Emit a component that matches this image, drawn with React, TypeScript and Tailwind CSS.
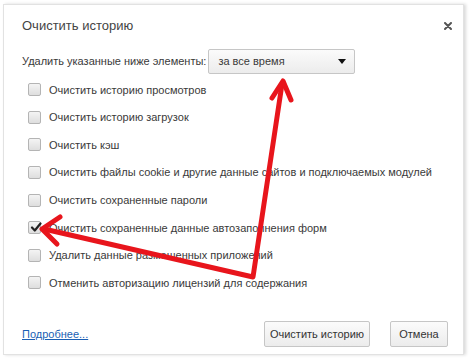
const items = [
  { label: "Очистить историю просмотров", checked: false },
  { label: "Очистить историю загрузок", checked: false },
  { label: "Очистить кэш", checked: false },
  { label: "Очистить файлы cookie и другие данные сайтов и подключаемых модулей", checked: false },
  { label: "Очистить сохраненные пароли", checked: false },
  { label: "Очистить сохраненные данные автозаполнения форм", checked: true },
  { label: "Удалить данные размещенных приложений", checked: false },
  { label: "Отменить авторизацию лицензий для содержания", checked: false },
];

function Checkbox({ checked }: { checked: boolean }) {
  return (
    <span className="relative flex h-[13px] w-[13px] shrink-0 items-center justify-center rounded-[2px] border border-[#b4b4b4] bg-gradient-to-b from-[#f4f4f4] to-[#dedede]">
      {checked && (
        <svg viewBox="0 0 12 12" className="absolute left-[1px] top-[-1px] h-[12px] w-[12px]">
          <path d="M2 6.5 L4.8 9.5 L10.5 2.5" fill="none" stroke="#222" strokeWidth="2.2" strokeLinecap="round" strokeLinejoin="round" />
        </svg>
      )}
    </span>
  );
}

export default function App() {
  return (
    <div
      className="relative h-[360px] w-[474px] overflow-hidden bg-white text-[#3a3a3a]"
      style={{ fontFamily: '"Liberation Sans", Arial, sans-serif' }}
    >
      <div className="ml-[3px] mt-[4px] h-[351px] w-[461px] border border-[#e2e2e2] shadow-[2px_0_3px_rgba(0,0,0,0.15)] pl-[18px] pr-[14px] pt-[11px]">
        <header className="flex h-[20px] items-center justify-between">
          <h1 className="text-[13px] text-[#444]">Очистить историю</h1>
          <svg viewBox="0 0 8 8" className="mr-[-3px] h-[8px] w-[8px]">
            <path d="M1 1 L7 7 M7 1 L1 7" stroke="#555" strokeWidth="2" strokeLinecap="round" />
          </svg>
        </header>

        <div className="mt-[13px] flex h-[25px] items-center text-[11px]">
          <span>Удалить указанные ниже элементы:</span>
          <div className="ml-[2px] flex h-[25px] w-[147px] items-center justify-between rounded-[2px] border border-[#c6c6c6] bg-gradient-to-b from-[#fbfbfb] to-[#ececec] pl-[9px] pr-[8px]">
            <span>за все время</span>
            <svg viewBox="0 0 8 5" className="h-[5px] w-[8px]">
              <path d="M0 0 H8 L4 5 Z" fill="#111" />
            </svg>
          </div>
        </div>

        <ul className="mt-[2px]">
          {items.map((it) => (
            <li key={it.label} className="flex h-[27.6px] items-center gap-[8px] pl-[6px] text-[11px]">
              <Checkbox checked={it.checked} />
              <span className="whitespace-nowrap">{it.label}</span>
            </li>
          ))}
        </ul>

        <footer className="mt-[24px] flex items-center justify-between pr-[1px]">
          <a className="text-[11px] text-[#1a5fb4] underline">Подробнее...</a>
          <div className="flex gap-[20px]">
            <button className="h-[26px] w-[106px] whitespace-nowrap rounded-[2px] border border-[#c6c6c6] bg-gradient-to-b from-[#fbfbfb] to-[#ececec] text-[11px] text-[#333]">
              Очистить историю
            </button>
            <button className="h-[26px] w-[58px] whitespace-nowrap rounded-[2px] border border-[#c6c6c6] bg-gradient-to-b from-[#fbfbfb] to-[#ececec] text-[11px] text-[#333]">
              Отмена
            </button>
          </div>
        </footer>
      </div>

      <svg className="pointer-events-none absolute left-0 top-0 h-[360px] w-[474px]" viewBox="0 0 474 360">
        <g fill="none" stroke="#e8151c" strokeWidth="5" strokeLinecap="round" strokeLinejoin="round">
          <polyline points="282,84 253,277 44,229" />
          <polyline points="272,98 283,81 291,100" />
          <polyline points="60,217 42,229 57,244" />
        </g>
      </svg>
    </div>
  );
}
